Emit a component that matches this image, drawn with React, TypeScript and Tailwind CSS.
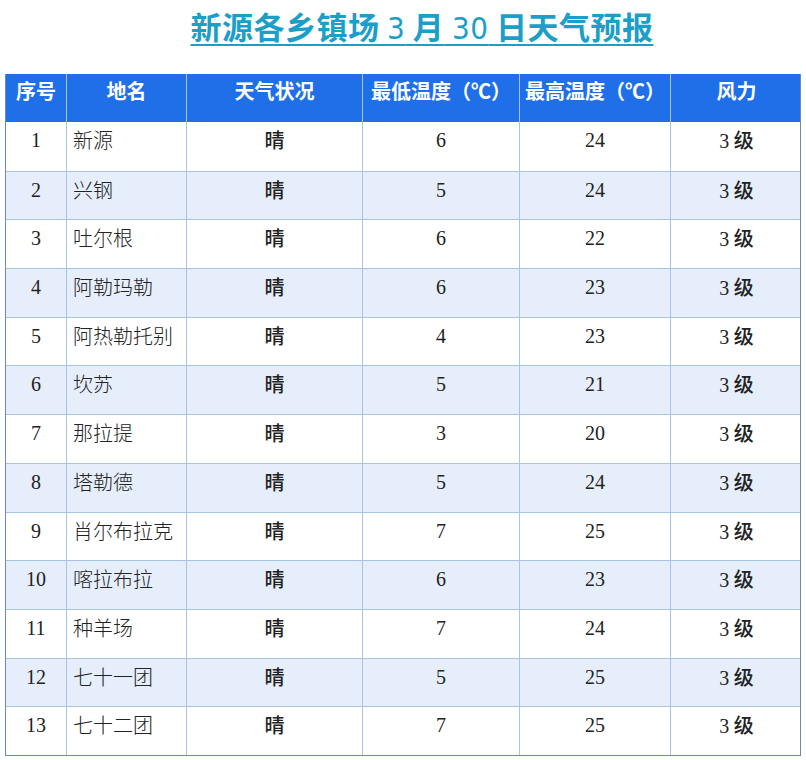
import React from "react";

const rows: [number, string, number, number][] = [
  [1, "新源", 6, 24],
  [2, "兴钢", 5, 24],
  [3, "吐尔根", 6, 22],
  [4, "阿勒玛勒", 6, 23],
  [5, "阿热勒托别", 4, 23],
  [6, "坎苏", 5, 21],
  [7, "那拉提", 3, 20],
  [8, "塔勒德", 5, 24],
  [9, "肖尔布拉克", 7, 25],
  [10, "喀拉布拉", 6, 23],
  [11, "种羊场", 7, 24],
  [12, "七十一团", 5, 25],
  [13, "七十二团", 7, 25],
];

const serif = { fontFamily: '"Liberation Serif", "Noto Sans CJK SC", serif' };
const sans = { fontFamily: '"Noto Sans CJK SC", sans-serif' };

export default function App() {
  return (
    <div className="w-[806px] h-[760px] bg-white overflow-hidden" style={sans}>
      {/* Title */}
      <div className="h-[74px] pt-[6px] pl-[38px] flex justify-center">
        <h1 className="text-[31px] leading-[40px] font-bold text-[#1b9fc9] underline underline-offset-[5px] decoration-[2px] tracking-[0.5px]">
          新源各乡镇场 <span style={{ fontFamily: '"DejaVu Sans Condensed", sans-serif' }} className="font-normal">3</span> 月{" "}
          <span style={{ fontFamily: '"DejaVu Sans Condensed", sans-serif' }} className="font-normal">30</span> 日天气预报
        </h1>
      </div>

      {/* Table */}
      <div className="ml-[5px] w-[796px] border border-[#6f89a8] border-t-0">
        <div className="grid grid-cols-[61px_120px_176px_157px_151px_131px] h-[48px] bg-[#1f6fe8] text-white text-[20px] font-bold leading-[34px]">
          <div className="text-center border-r border-[#a9c6ea]">序号</div>
          <div className="text-center border-r border-[#a9c6ea]">地名</div>
          <div className="text-center border-r border-[#a9c6ea]">天气状况</div>
          <div className="text-center border-r border-[#a9c6ea] whitespace-nowrap">最低温度（℃）</div>
          <div className="text-center border-r border-[#a9c6ea] whitespace-nowrap">最高温度（℃）</div>
          <div className="text-center">风力</div>
        </div>
        {rows.map(([n, name, lo, hi], i) => (
          <div
            key={n}
            className={`grid grid-cols-[61px_120px_176px_157px_151px_131px] h-[48.7px] text-[20px] leading-[36px] text-[#222] ${
              i % 2 === 1 ? "bg-[#e6eefb]" : "bg-white"
            } ${i > 0 ? "border-t border-[#a9c3e2]" : ""}`}
          >
            <div className="text-center border-r border-[#a9c3e2]" style={serif}>{n}</div>
            <div className="pl-[6px] border-r border-[#a9c3e2] font-light whitespace-nowrap">{name}</div>
            <div className="text-center border-r border-[#a9c3e2] font-medium">晴</div>
            <div className="text-center border-r border-[#a9c3e2]" style={serif}>{lo}</div>
            <div className="text-center border-r border-[#a9c3e2]" style={serif}>{hi}</div>
            <div className="text-center font-medium">
              <span style={serif} className="font-normal">3</span> 级
            </div>
          </div>
        ))}
      </div>
    </div>
  );
}
